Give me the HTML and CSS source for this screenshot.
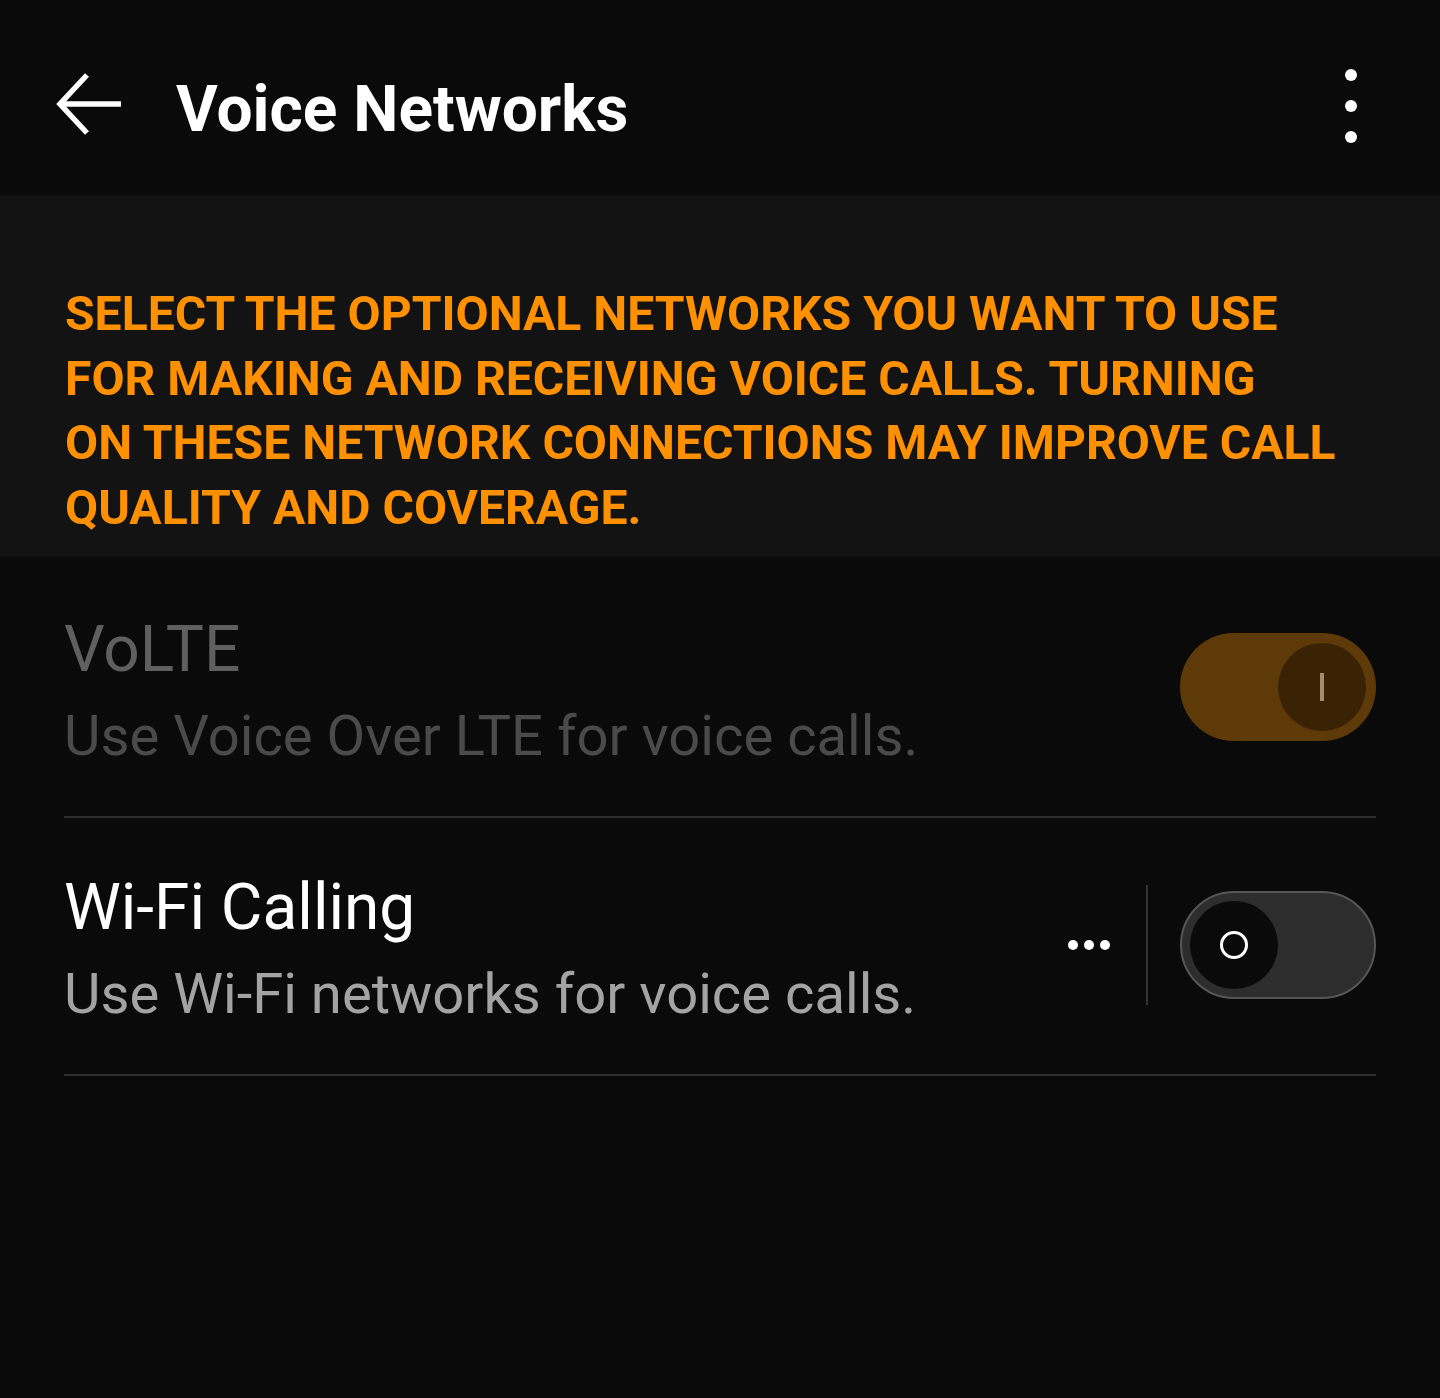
FILE: index.html
```html
<!DOCTYPE html>
<html>
<head>
<meta charset="utf-8">
<link rel="stylesheet" href="styles.css">
</head>
<body>
<header class="appbar">
  <svg class="back" width="70" height="64" viewBox="0 0 70 64">
    <path d="M67 31 H6 M33 2 L6 31 L33 60" fill="none" stroke="#fff" stroke-width="5.5"/>
  </svg>
  <h1 class="title">Voice Networks</h1>
  <svg class="more" width="14" height="76" viewBox="0 0 14 76">
    <circle cx="7" cy="7" r="6" fill="#fff"/>
    <circle cx="7" cy="38" r="6" fill="#fff"/>
    <circle cx="7" cy="69" r="6" fill="#fff"/>
  </svg>
</header>
<section class="banner">
  <p>SELECT THE OPTIONAL NETWORKS YOU WANT TO USE<br>FOR MAKING AND RECEIVING VOICE CALLS. TURNING<br>ON THESE NETWORK CONNECTIONS MAY IMPROVE CALL<br>QUALITY AND COVERAGE.</p>
</section>
<main class="list">
  <div class="row disabled">
    <div class="text">
      <div class="row-title">VoLTE</div>
      <div class="row-sub">Use Voice Over LTE for voice calls.</div>
    </div>
    <div class="toggle on">
      <div class="knob"><span class="bar"></span></div>
    </div>
  </div>
  <div class="row">
    <div class="text">
      <div class="row-title">Wi-Fi Calling</div>
      <div class="row-sub">Use Wi-Fi networks for voice calls.</div>
    </div>
    <svg class="dots" width="44" height="12" viewBox="0 0 44 12">
      <circle cx="6" cy="6" r="5" fill="#fff"/>
      <circle cx="22" cy="6" r="5" fill="#fff"/>
      <circle cx="38" cy="6" r="5" fill="#fff"/>
    </svg>
    <span class="vsep"></span>
    <div class="toggle off">
      <div class="knob"><span class="ring"></span></div>
    </div>
  </div>
</main>
</body>
</html>
```
FILE: styles.css
```css
html, body {
  margin: 0;
  padding: 0;
  background: #0a0a0a;
  font-family: Roboto, "Noto Sans", sans-serif;
}
body {
  width: 1440px;
  min-height: 1398px;
}
.appbar {
  height: 195px;
  display: flex;
  align-items: center;
  padding: 20px 82px 0 54px;
  box-sizing: border-box;
  background: #0a0a0a;
}
.back {
  display: block;
  margin-top: -6px;
}
.title {
  margin: 5px 0 0 52px;
  font-size: 64px;
  font-weight: 700;
  color: #fff;
  line-height: 80px;
  flex: 1;
}
.more {
  display: block;
  margin-top: -4px;
}
.banner {
  background: #131313;
  padding: 87px 40px 17px 65px;
}
.banner p {
  margin: 0;
  color: #ff9100;
  font-size: 48.1px;
  font-weight: 700;
  line-height: 64.5px;
  white-space: nowrap;
}
.list {
  padding: 3px 64px 0;
}
.row {
  display: flex;
  align-items: center;
  padding: 48px 0 46px;
  border-bottom: 2px solid #2e2e2e;
}
.text {
  flex: 1;
}
.row-title {
  font-size: 64px;
  line-height: 84px;
  color: #fff;
}
.row-sub {
  font-size: 56.2px;
  line-height: 68px;
  color: #a3a3a3;
  margin-top: 10px;
}
.disabled .row-title { color: #5f5f5f; }
.disabled .row-sub { color: #4a4a4a; }
.toggle {
  width: 196px;
  height: 108px;
  border-radius: 54px;
  box-sizing: border-box;
  display: flex;
  align-items: center;
  padding: 0 10px;
  margin-top: -4px;
}
.toggle.on {
  background: #5e3a09;
  justify-content: flex-end;
}
.toggle.off {
  background: #2d2d2d;
  border: 2px solid #565656;
  padding: 0 8px;
}
.knob {
  width: 88px;
  height: 88px;
  border-radius: 50%;
  display: flex;
  align-items: center;
  justify-content: center;
}
.on .knob { background: #3a2305; }
.off .knob { background: #0a0a0a; }
.bar {
  width: 4px;
  height: 28px;
  background: #a38c72;
}
.ring {
  width: 22px;
  height: 22px;
  border: 3.5px solid #fff;
  border-radius: 50%;
}
.dots {
  display: block;
  margin-right: 35px;
  margin-top: -4px;
}
.vsep {
  width: 2px;
  height: 120px;
  background: #333;
  margin-right: 32px;
  margin-top: -4px;
}
```
